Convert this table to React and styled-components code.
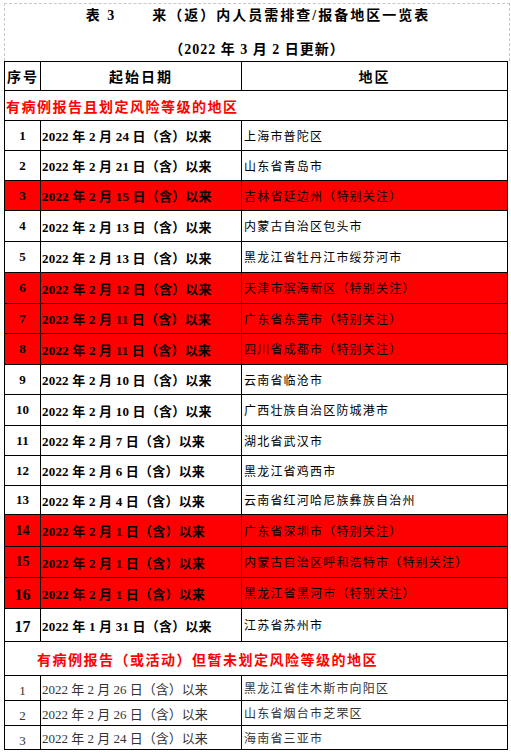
import React from "react"
import styled, { createGlobalStyle } from "styled-components"

const GlobalStyle = createGlobalStyle`
  html, body {
    margin: 0;
    padding: 0;
    background: #fff;
  }
  body {
    font-family: "Liberation Serif", "Noto Sans CJK SC", serif;
    color: #000;
  }
`

const Page = styled.div`
  padding: 3px 0 0 4px;
  width: 506px;
`

const TitleBox = styled.div`
  height: 58px;
  border: 1px dashed #c8c8c8;
  border-bottom: none;
  box-sizing: border-box;
  display: flex;
  flex-direction: column;
  align-items: center;
  font-weight: 700;
  font-size: 14px;
`

const Title = styled.div`
  height: 24px;
  line-height: 24px;
  letter-spacing: 2px;
  padding-left: 2px;

  .tag {
    margin-right: 36px;
  }
`

const Subtitle = styled.div`
  margin-top: 12px;
  height: 20px;
  line-height: 20px;
  letter-spacing: 1px;
`

const Table = styled.table`
  width: 503px;
  border-collapse: collapse;
  table-layout: fixed;

  td, th {
    border: 1px solid #000;
    padding: 0;
    overflow: hidden;
    white-space: nowrap;
  }
`

const Row = styled.tr`
  height: ${(p) => p.$h}px;
  background: ${(p) => (p.$red ? "#ff0000" : "#fff")};
`

const HeadCell = styled.th`
  font-size: 14px;
  font-weight: 700;
  letter-spacing: 2px;
  text-align: ${(p) => (p.$left ? "left" : "center")};
  padding-left: ${(p) => (p.$left ? "2px" : "0")} !important;
`

const SectionCell = styled.td`
  color: #ff0000;
  font-size: 14px;
  font-weight: 700;
  letter-spacing: 1.5px;
  padding-left: ${(p) => p.$indent}px !important;
`

const NumCell = styled.td`
  text-align: center;
  font-size: ${(p) => p.$size}px;
  font-weight: ${(p) => (p.$light ? 400 : 700)};
  color: ${(p) => (p.$light ? "#333" : "#000")};
  padding-top: ${(p) => p.$drop}px !important;
`

const DateCell = styled.td`
  font-size: 13px;
  font-weight: ${(p) => (p.$light ? 400 : 700)};
  color: ${(p) => (p.$light ? "#333" : "#000")};
  letter-spacing: ${(p) => (p.$light ? 0 : 0.2)}px;
  padding-left: 1px !important;
`

const AreaCell = styled.td`
  font-size: 12px;
  color: ${(p) => (p.$light ? "#333" : "#000")};
  letter-spacing: 1.2px;
  padding-left: 2px !important;
`

const marked = [
  { n: 1, h: 30, date: "2022 年 2 月 24 日（含）以来", area: "上海市普陀区" },
  { n: 2, h: 30, date: "2022 年 2 月 21 日（含）以来", area: "山东省青岛市" },
  { n: 3, h: 30, date: "2022 年 2 月 15 日（含）以来", area: "吉林省延边州（特别关注）", red: true },
  { n: 4, h: 31, date: "2022 年 2 月 13 日（含）以来", area: "内蒙古自治区包头市" },
  { n: 5, h: 31, date: "2022 年 2 月 13 日（含）以来", area: "黑龙江省牡丹江市绥芬河市" },
  { n: 6, h: 31, date: "2022 年 2 月 12 日（含）以来", area: "天津市滨海新区（特别关注）", red: true },
  { n: 7, h: 30, date: "2022 年 2 月 11 日（含）以来", area: "广东省东莞市（特别关注）", red: true },
  { n: 8, h: 31, date: "2022 年 2 月 11 日（含）以来", area: "四川省成都市（特别关注）", red: true },
  { n: 9, h: 30, date: "2022 年 2 月 10 日（含）以来", area: "云南省临沧市" },
  { n: 10, h: 31, date: "2022 年 2 月 10 日（含）以来", area: "广西壮族自治区防城港市" },
  { n: 11, h: 30, date: "2022 年 2 月 7 日（含）以来", area: "湖北省武汉市" },
  { n: 12, h: 30, date: "2022 年 2 月 6 日（含）以来", area: "黑龙江省鸡西市" },
  { n: 13, h: 29, date: "2022 年 2 月 4 日（含）以来", area: "云南省红河哈尼族彝族自治州" },
  { n: 14, h: 32, size: 14, date: "2022 年 2 月 1 日（含）以来", area: "广东省深圳市（特别关注）", red: true },
  { n: 15, h: 31, size: 14, date: "2022 年 2 月 1 日（含）以来", area: "内蒙古自治区呼和浩特市（特别关注）", red: true },
  { n: 16, h: 31, size: 16, drop: 4, date: "2022 年 2 月 1 日（含）以来", area: "黑龙江省黑河市（特别关注）", red: true },
  { n: 17, h: 33, size: 16, drop: 3, date: "2022 年 1 月 31 日（含）以来", area: "江苏省苏州市" },
]

const pending = [
  { n: 1, h: 25, date: "2022 年 2 月 26 日（含）以来", area: "黑龙江省佳木斯市向阳区" },
  { n: 2, h: 25, date: "2022 年 2 月 26 日（含）以来", area: "山东省烟台市芝罘区" },
  { n: 3, h: 24, date: "2022 年 2 月 24 日（含）以来", area: "海南省三亚市" },
]

const App = () => {
  return (
    <Page>
      <GlobalStyle />
      <TitleBox>
        <Title>
          <span className="tag">表 3</span>
          <span>来（返）内人员需排查/报备地区一览表</span>
        </Title>
        <Subtitle>（2022 年 3 月 2 日更新）</Subtitle>
      </TitleBox>
      <Table>
        <colgroup>
          <col style={{ width: 36 }} />
          <col style={{ width: 201 }} />
          <col style={{ width: 266 }} />
        </colgroup>
        <tbody>
          <Row $h={29}>
            <HeadCell $left>序号</HeadCell>
            <HeadCell>起始日期</HeadCell>
            <HeadCell>地区</HeadCell>
          </Row>
          <Row $h={30}>
            <SectionCell colSpan={3} $indent={1}>
              有病例报告且划定风险等级的地区
            </SectionCell>
          </Row>
          {marked.map((item) => (
            <Row key={`m${item.n}`} $h={item.h} $red={item.red}>
              <NumCell $size={item.size || 13} $drop={item.drop || 0}>
                {item.n}
              </NumCell>
              <DateCell>{item.date}</DateCell>
              <AreaCell>{item.area}</AreaCell>
            </Row>
          ))}
          <Row $h={34}>
            <SectionCell colSpan={3} $indent={32}>
              有病例报告（或活动）但暂未划定风险等级的地区
            </SectionCell>
          </Row>
          {pending.map((item) => (
            <Row key={`p${item.n}`} $h={item.h}>
              <NumCell $size={13} $drop={6} $light>
                {item.n}
              </NumCell>
              <DateCell $light>{item.date}</DateCell>
              <AreaCell $light>{item.area}</AreaCell>
            </Row>
          ))}
        </tbody>
      </Table>
    </Page>
  )
}

export default App
